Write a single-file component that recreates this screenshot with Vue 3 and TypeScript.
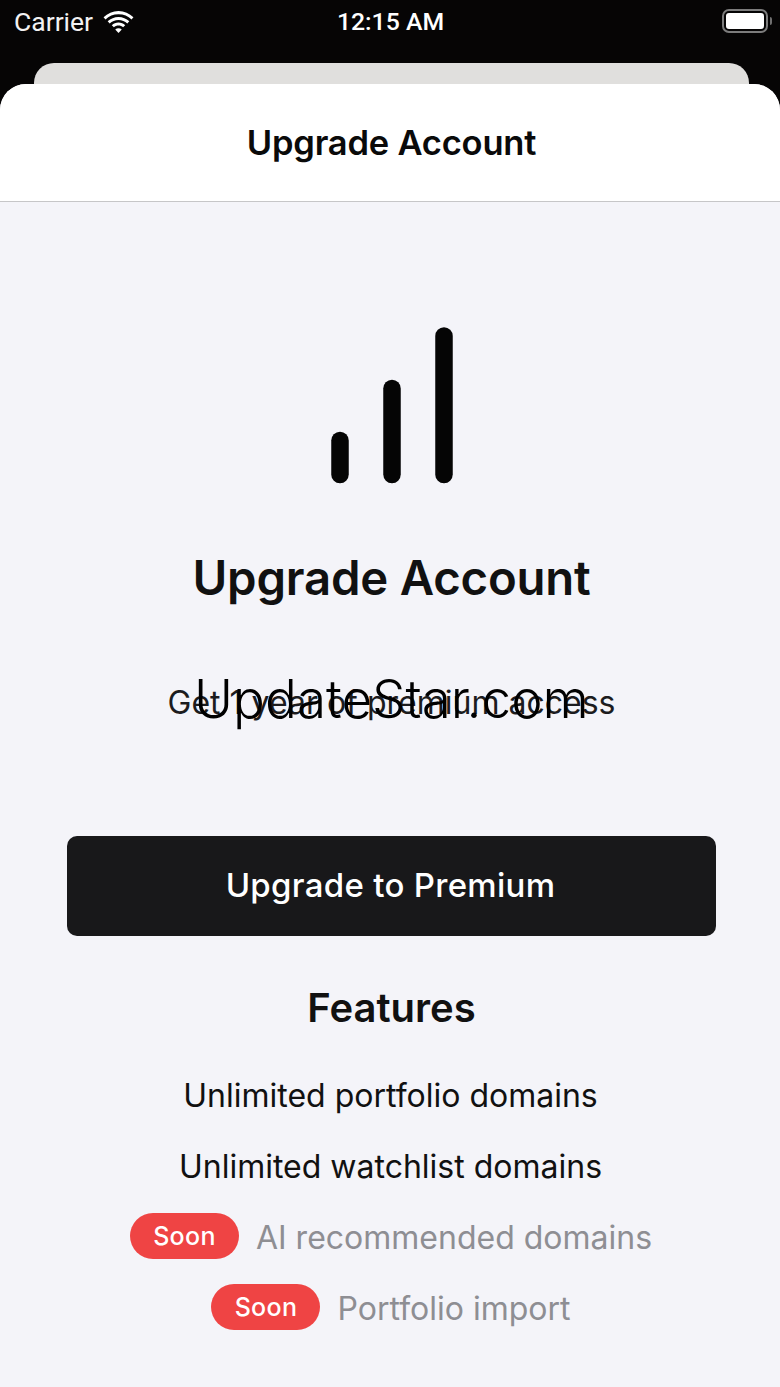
<script setup lang="ts">
interface Feature {
  label: string
  soon: boolean
}

const features: Feature[] = [
  { label: 'Unlimited portfolio domains', soon: false },
  { label: 'Unlimited watchlist domains', soon: false },
  { label: 'AI recommended domains', soon: true },
  { label: 'Portfolio import', soon: true },
]
</script>

<template>
  <div class="screen">
    <div class="status-bar">
      <div class="status-left">
        <span class="carrier">Carrier</span>
        <svg class="wifi" viewBox="0 0 32 24" fill="#fff">
          <path d="M16 4.500c-5.400 0-10 2-13.600 5.400L0.400 7.600C4.600 3.400 10 1 16 1s11.400 2.400 15.600 6.600l-2 2.300C26 6.500 21.400 4.500 16 4.500z" />
          <path d="M16 10.500c-3.600 0-6.700 1.300-9.200 3.600l-2.100-2.300C7.800 9 11.700 7.300 16 7.300s8.200 1.700 11.300 4.500l-2.100 2.300c-2.500-2.300-5.600-3.600-9.200-3.600z" />
          <path d="M16 16.300c-1.900 0-3.500.7-4.800 1.800l-2.200-2.300c1.900-1.700 4.300-2.700 7-2.700s5.100 1 7 2.700l-2.200 2.300c-1.300-1.100-2.900-1.800-4.800-1.800z" />
          <path d="M16 24l-3.400-3.700c.9-.8 2.100-1.200 3.400-1.200s2.500.4 3.400 1.200z" />
        </svg>
      </div>
      <span class="time">12:15 AM</span>
      <div class="battery">
        <div class="battery-shell"><div class="battery-fill"></div></div>
        <div class="battery-cap"></div>
      </div>
    </div>

    <div class="back-card"></div>

    <div class="sheet">
      <header class="sheet-header">Upgrade Account</header>

      <main class="sheet-body">
        <svg class="bars" viewBox="0 0 122 157" fill="none" stroke="#050505" stroke-width="17.500" stroke-linecap="round">
          <path d="M9 113.500V147.500" />
          <path d="M61 61.500V147.500" />
          <path d="M113 9V147.500" />
        </svg>

        <h1 class="title">Upgrade Account</h1>

        <div class="subtitle-wrap">
          <p class="subtitle">Get 1 year of premium access</p>
          <span class="watermark">UpdateStar.com</span>
        </div>

        <button class="cta" type="button">Upgrade to Premium</button>

        <h2 class="features-title">Features</h2>

        <ul class="features">
          <li v-for="item in features" :key="item.label" class="feature">
            <span v-if="item.soon" class="badge">Soon</span>
            <span class="feature-label" :class="{ 'feature-muted': item.soon }">{{ item.label }}</span>
          </li>
        </ul>
      </main>
    </div>
  </div>
</template>

<style>
html,
body {
  margin: 0;
  background: #050505;
}
</style>

<style scoped>
.screen {
  width: 780px;
  height: 1387px;
  overflow: hidden;
  background: #060505;
  font-family: Inter, 'Noto Sans', sans-serif;
  display: flex;
  flex-direction: column;
}

.status-bar {
  height: 63px;
  flex: none;
  padding: 0 8px 21px 14px;
  box-sizing: border-box;
  display: grid;
  grid-template-columns: 1fr auto 1fr;
  align-items: center;
  color: #fff;
}

.status-left {
  display: flex;
  align-items: center;
  gap: 10px;
}

.carrier {
  font-family: Roboto, 'Liberation Sans', sans-serif;
  font-size: 26.500px;
  font-weight: 400;
  color: #f2f2f2;
}

.wifi {
  width: 31px;
  height: 23px;
}

.time {
  font-family: Roboto, 'Liberation Sans', sans-serif;
  font-size: 24.800px;
  font-weight: 500;
  margin-right: 5px;
}

.battery {
  display: flex;
  align-items: center;
  justify-content: flex-end;
  gap: 2px;
}

.battery-shell {
  width: 46px;
  height: 24px;
  box-sizing: border-box;
  border: 2px solid #7c7c7c;
  border-radius: 7px;
  padding: 2px;
}

.battery-fill {
  height: 100%;
  border-radius: 3px;
  background: #fff;
}

.battery-cap {
  width: 2px;
  height: 8px;
  border-radius: 0 2px 2px 0;
  background: #6f6f6f;
}

.back-card {
  flex: none;
  height: 40px;
  margin: 0 31px 0 34px;
  background: #e0dfdd;
  border-radius: 20px 20px 0 0;
}

.sheet {
  flex: 1;
  margin-top: -19px;
  border-radius: 26px 26px 0 0;
  overflow: hidden;
  display: flex;
  flex-direction: column;
  background: #f4f4f9;
}

.sheet-header {
  height: 118px;
  flex: none;
  box-sizing: border-box;
  padding: 0 0 1px 3px;
  background: #fff;
  border-bottom: 1px solid #c6c6c8;
  display: flex;
  align-items: center;
  justify-content: center;
  font-size: 34.500px;
  font-weight: 600;
  color: #0a0a0a;
  letter-spacing: -0.2px;
}

.sheet-body {
  flex: 1;
  display: flex;
  flex-direction: column;
  align-items: center;
  padding-top: 125px;
}

.bars {
  width: 122px;
  height: 157px;
  margin-left: 3px;
  flex: none;
}

.title {
  margin: 64px 0 0 3px;
  font-size: 47.300px;
  line-height: 60px;
  font-weight: 600;
  color: #111;
  letter-spacing: -0.2px;
}

.subtitle-wrap {
  margin: 70px 0 0 3px;
  position: relative;
}

.subtitle {
  margin: 0;
  font-size: 32px;
  line-height: 50px;
  color: #1c1c1e;
}

.watermark {
  position: absolute;
  left: 50%;
  top: -9px;
  transform: translateX(-50%);
  white-space: nowrap;
  font-size: 53px;
  line-height: 60px;
  font-weight: 340;
  color: #000;
}

.cta {
  margin: 108px 0 0 3px;
  width: 649px;
  height: 100px;
  padding: 0 2px 2px 0;
  border: none;
  border-radius: 10px;
  background: #18181a;
  color: #fff;
  font-family: inherit;
  font-size: 33px;
  font-weight: 500;
  letter-spacing: 0.3px;
}

.features-title {
  margin: 47px 0 0 3px;
  font-size: 40px;
  line-height: 50px;
  font-weight: 600;
  color: #111;
}

.features {
  list-style: none;
  margin: 36px 0 0;
  padding: 0;
  display: flex;
  flex-direction: column;
  align-items: center;
  gap: 21px;
}

.feature {
  height: 50px;
  display: flex;
  align-items: center;
  gap: 17px;
  font-size: 32px;
  color: #111;
  margin-left: 1px;
}

.feature-label {
  padding-top: 2px;
}

.feature-muted {
  color: #8e8e93;
}

.badge {
  width: 109px;
  height: 46px;
  margin-left: 1px;
  border-radius: 23px;
  background: #ef4444;
  color: #fff;
  font-size: 25px;
  font-weight: 500;
  letter-spacing: 0.3px;
  display: flex;
  align-items: center;
  justify-content: center;
}
</style>
